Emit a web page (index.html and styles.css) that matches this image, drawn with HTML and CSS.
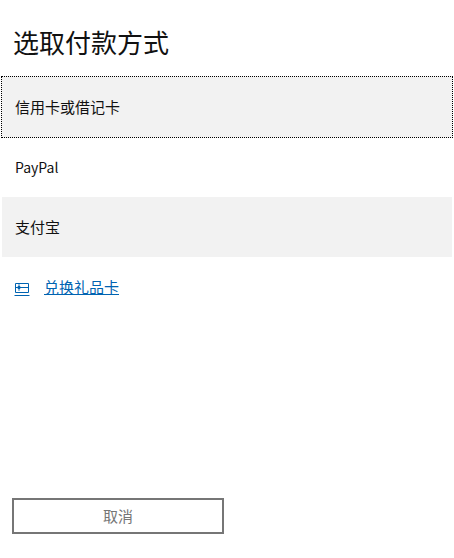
FILE: index.html
```html
<!DOCTYPE html>
<html lang="zh-CN">
<head>
  <meta charset="UTF-8">
  <meta name="viewport" content="width=device-width, initial-scale=1.0">
  <title>选取付款方式</title>
  <link rel="stylesheet" href="styles.css">
</head>
<body>
  <div class="page">
    <h1 class="title">选取付款方式</h1>
    <div class="methods">
      <div class="method shaded focused">信用卡或借记卡</div>
      <div class="method latin">PayPal</div>
      <div class="method shaded">支付宝</div>
    </div>
    <div class="redeem">
      <svg class="redeem-icon" width="16" height="14" viewBox="0 0 16 14" fill="none" stroke="#0063b1" stroke-width="1">
        <path d="M1.5 1.5h13v9h-13z"/>
        <path d="M1.5 5.5h13"/>
        <path d="M5 2v7" stroke-width="0.8"/>
        <circle cx="5" cy="5.5" r="1.3" fill="#0063b1"/>
        <path d="M0.5 13.5h15"/>
      </svg>
      <a class="redeem-link" href="#">兑换礼品卡</a>
    </div>
    <button class="cancel">取消</button>
  </div>
</body>
</html>
```

FILE: styles.css
```css
* {
  box-sizing: border-box;
}

body {
  margin: 0;
  background: #fff;
  color: #111;
  font-family: "Noto Sans CJK SC", "Noto Sans", sans-serif;
}

.page {
  display: flex;
  flex-direction: column;
  height: 558px;
  padding-bottom: 24px;
}

.title {
  margin: 0;
  height: 76px;
  padding: 23px 0 0 13px;
  font-size: 26px;
  font-weight: 400;
  line-height: 38px;
}

.methods {
  display: flex;
  flex-direction: column;
}

.method {
  display: flex;
  align-items: center;
  height: 60px;
  margin: 0 2px;
  padding: 0 0 2px 13px;
  font-size: 15px;
}

.latin {
  padding-bottom: 0;
  font-size: 14px;
}

.shaded {
  background: #f2f2f2;
}

.focused {
  height: 62px;
  margin: 0 1px -1px;
  border: 1px dotted #000;
}

.redeem {
  display: flex;
  align-items: center;
  gap: 14px;
  margin-top: 19px;
  padding-left: 14px;
}

.redeem-icon {
  margin-top: 3px;
}

.redeem-link {
  color: #0063b1;
  font-size: 15px;
  line-height: 22px;
}

.cancel {
  width: 212px;
  height: 36px;
  margin: auto 0 0 12px;
  padding: 0 0 2px;
  border: 2px solid #767676;
  background: #fff;
  color: #767676;
  font-family: inherit;
  font-size: 15px;
}
```
